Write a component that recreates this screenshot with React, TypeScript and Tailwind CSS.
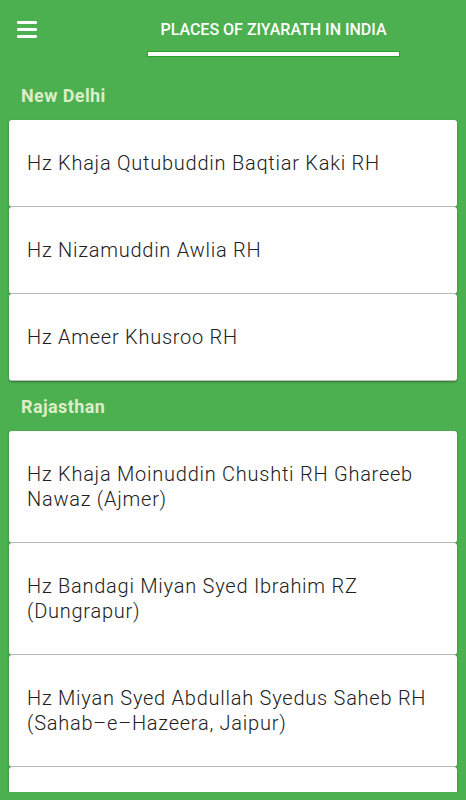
import React from "react";

const sections = [
  {
    name: "New Delhi",
    places: [
      "Hz Khaja Qutubuddin Baqtiar Kaki RH",
      "Hz Nizamuddin Awlia RH",
      "Hz Ameer Khusroo RH",
    ],
  },
  {
    name: "Rajasthan",
    places: [
      "Hz Khaja Moinuddin Chushti RH Ghareeb Nawaz (Ajmer)",
      "Hz Bandagi Miyan Syed Ibrahim RZ (Dungrapur)",
      "Hz Miyan Syed Abdullah Syedus Saheb RH (Sahab\u2013e\u2013Hazeera, Jaipur)",
      "",
    ],
  },
];

export default function App() {
  return (
    <div
      className="w-[466px] h-[800px] bg-[#4caf50] flex flex-col overflow-hidden"
      style={{ fontFamily: "Roboto, 'Liberation Sans', sans-serif" }}
    >
      <header className="h-[70px] shrink-0 flex items-start relative">
        <button className="flex flex-col gap-[4px] ml-[17px] mt-[21px]">
          <span className="block w-[20px] h-[3px] rounded-[1px] bg-white" />
          <span className="block w-[20px] h-[3px] rounded-[1px] bg-white" />
          <span className="block w-[20px] h-[3px] rounded-[1px] bg-white" />
        </button>
        <div className="absolute left-[147px] top-0 w-[253px] flex flex-col items-center">
          <h1 className="mt-[20px] h-[20px] leading-[20px] text-white text-[16px] font-medium">
            PLACES OF ZIYARATH IN INDIA
          </h1>
          <div className="mt-[11px] w-full h-[6px] bg-white border border-[#23a423]" />
        </div>
      </header>

      <main className="flex-1 overflow-hidden mb-[8px]">
        {sections.map((s) => (
          <section key={s.name}>
            <h2 className="h-[50px] pl-[21px] pt-[15px] text-[18px] leading-[22px] tracking-[0.4px] font-bold text-[#dcedc8]">
              {s.name}
            </h2>
            <div className="mx-[9px] flex flex-col">
              {s.places.map((p, i) => (
                <article
                  key={i}
                  className="bg-white rounded-[3px] border-b border-[#bdbdbd] shadow-[0_1px_2px_rgba(0,0,0,0.35)] min-h-[87px] px-[18px] py-[30.5px] flex items-center"
                >
                  {p && (
                    <p className="text-[20px] leading-[25px] tracking-[0.75px] font-light text-[#212121]">
                      {p}
                    </p>
                  )}
                </article>
              ))}
            </div>
          </section>
        ))}
      </main>
    </div>
  );
}
